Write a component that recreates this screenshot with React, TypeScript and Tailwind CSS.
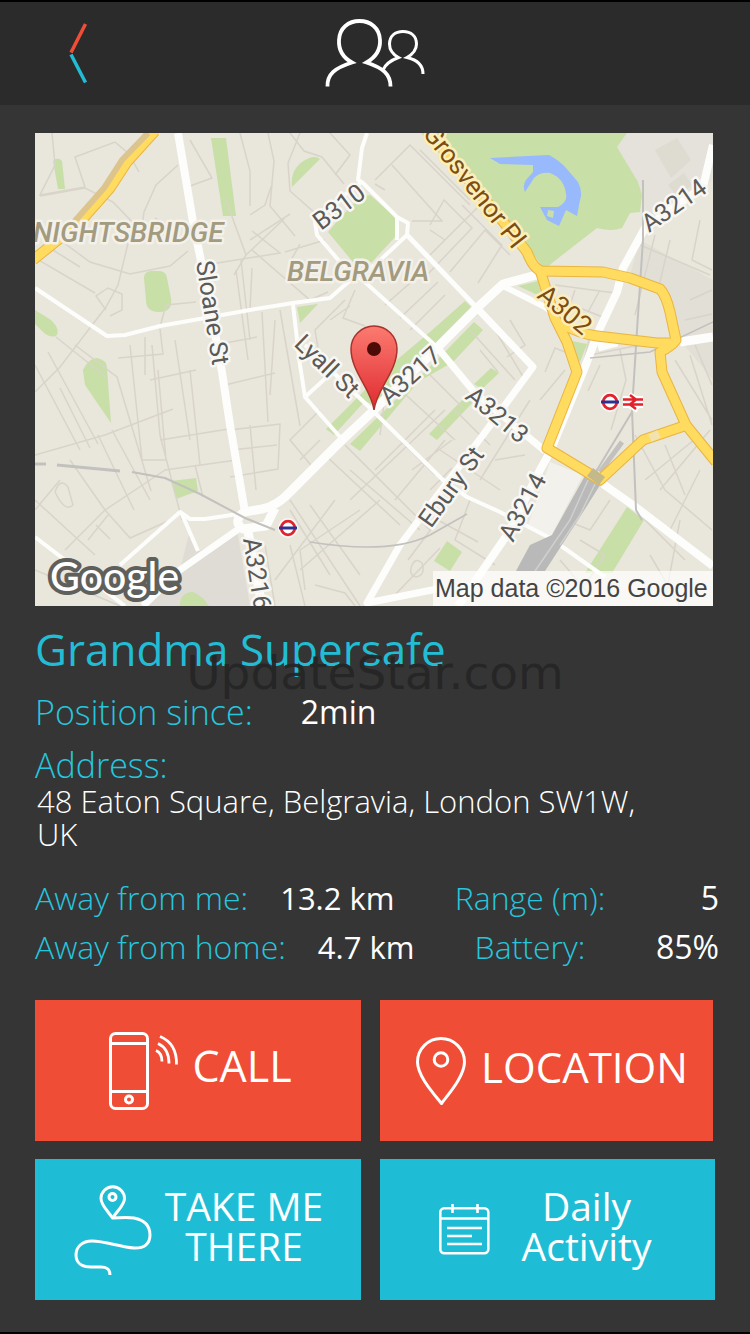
import React from 'react'

interface MapLabel {
  text: string
  x: number
  y: number
  angle: number
  anchor?: 'start' | 'end'
}

const streetLabels: MapLabel[] = [
  { text: 'Sloane St', x: 196, y: 262, angle: 81 },
  { text: 'B310', x: 321, y: 231, angle: -37 },
  { text: 'Lyall St', x: 293, y: 345, angle: 44 },
  { text: 'A3217', x: 389, y: 406, angle: -42 },
  { text: 'A3213', x: 464, y: 398, angle: 40 },
  { text: 'Ebury St', x: 431, y: 529, angle: -54 },
  { text: 'A3214', x: 513, y: 543, angle: -62 },
  { text: 'A3214', x: 649, y: 233, angle: -35 },
  { text: 'A3216', x: 243, y: 539, angle: 81 }
]

const mainRoadLabels: MapLabel[] = [
  { text: 'Grosvenor Pl', x: 513, y: 250, angle: 52, anchor: 'end' },
  { text: 'A302', x: 536, y: 297, angle: 40 }
]

const parks = [
  'M421 133L530 250L545 270L552 263L597 228Q612 232 622 228L630 213L640 212L642 195L638 182L617 147L627 133Z',
  'M328 232L340 218L360 197L370 195L393 215Q401 226 395 237L372 262Q362 264 353 262Z',
  'M211 138h15l10 78h-13Z',
  'M144 278q0-7 8-7h7q7 0 8 7l4 20q2 14-12 14q-13 0-13-12Z',
  'M53 161q5-5 9 0l3 28h-7Z',
  'M35 310l16 10q10 10 5 16q-6 2-13-4l-8-8Z',
  'M83 370q6-12 14-12q10 2 10 10l4 55l-26-38Z',
  'M292 187q-2-16 10-25q12-8 18-3Z',
  'M297 307l21-3l-18 19Z',
  'M430 332l35-31l6 6l-97 98l-9-4l-31 34l-8-6l60-60Z',
  'M350 444l93-90l31-32l9 8l-30 32l-35 20l-58 69Z',
  'M429 434l37-38l8 5l-37 39Z',
  'M474 384l17-16l8 5l-17 16Z',
  'M171 481l25-3l2 13l-22 8Z',
  'M447 541l15 11l-12 19l-16-10Z',
  'M627 507l17 13l-32 53h-27Z',
  'M180 606q0-14 13-14q10 4 16 14Z',
  'M518 286l20-5l4 16Z',
  'M567 340l20 4l-7 18Z'
]

const minorRoads = [
  'M52 133l3 32l-15 30l45-8l-10-30l40-15l14 12l10 18',
  'M178 165l-22 20l-12 27l-4 28l35-10l-20-12',
  'M190 140l22 38l-22 8',
  'M40 196l45-8l28 14l27 28l40 8',
  'M60 240l30 22l40 12l40-8l18-15',
  'M130 235l-12 50l-12 22l-46 60l-25 25',
  'M35 258l60 35M45 245l35 22',
  'M106 310l-10-14l12-8l14 6v16l-12 6',
  'M160 327l6-22l30-3M145 375v-38M118 358l45-4l-3-25',
  'M75 345l42 32l34 114M56 337l50 40',
  'M35 365l45 85M48 352l50 92M60 388l30 60',
  'M35 455l70-20l68-26M98 435l36 75M112 430l38 70',
  'M130 345l12 115l24 0l-8-90M152 345l8 90l22 85',
  'M175 340l15 100M190 370l10 95M150 380l46-10',
  'M160 440l75-12M165 470l72-10M195 465l8 32',
  'M35 500l60 55M60 480l-25 30M70 460l35 50l60-40M105 510l-40 40M105 510l25 28l45-20',
  'M55 492q5-15 13-5l5 18q-8 8-18-13',
  'M88 540l20-25M96 525l14 14M35 570l85 36',
  'M226 200l20 55l-12 20M240 133l10 38v35M268 133l6 28l-4 45l25 30',
  'M250 215l15-10l6-18M246 255l38-36M205 265l75-12l-28-22',
  'M236 270l12 90M250 340l-9-80M280 310l20 116M262 312l6 110M275 320l-5 75M215 345l42-8M225 385l50-12',
  'M230 430l50-6l-2 45l-48 8M232 450l45-5M250 425l6 65',
  'M290 133l14 18l18 6l22 27M300 133l-12 30l2 28l25 22M330 133l20 22l-15 20',
  'M250 240l40-26M252 250l58 50l18-8M285 252l40-12M290 262l10-18M252 268l-2 42',
  'M345 300l-30 30l5 30M355 290l-12 28l22 8M330 320l20-14',
  'M375 180l35-35l60 60M392 165l50 56l-30 0M420 150l50 50M385 190l-10-6',
  'M430 225l14-25l28 28l-44 46M445 240l-15-10M430 255l60-60M450 272l35-42l25 25M462 205l40 40l-24 38',
  'M410 330l35-35M385 305l40-35M400 318l38-36',
  'M395 385l60 55M385 395l-5 40M375 470l60-60M350 500l95-90M420 365l42 42M400 440l35 35',
  'M325 455l75 70M345 445l85 85M310 505l50 70M290 510l40 65M335 500l-60 80',
  'M290 500l70 106M300 570l80-70M350 470l70 60M305 590l-5-40l60-40',
  'M315 470l-25-30l30-30M300 460l20-20M395 500l50-60M412 470l40-30M430 490l22-22',
  'M265 545l10 61M290 545l15 61M315 585l30 8l10 13',
  'M408 560l30-40l40 22M390 600l50-52M470 500l-15 40l40 25',
  'M412 565q4-8 10-2q4 12-6 14q-8-2-4-12',
  'M495 330l30 50M510 320l15 25l-18 12M470 330l45 50M480 350l18 22',
  'M455 410l35 35M480 480l50-80M500 490l-60-40M495 460l30-5',
  'M545 372l10-24l15 6M540 400l25-30M560 300l45 18M575 290l-6 18M600 290l-12 22M555 285l60 8',
  'M590 335l-8 35M590 355l40-8l30-4M600 365l-12 26M620 350l6 30l-15 50',
  'M640 245l70 30M655 235l-20 80M700 220l-8 40l20 10M670 240l-12 50',
  'M690 300l22-10M685 320l27-6M690 355l22 70M675 360l37 60M695 345l17 40',
  'M635 435l30 55l47 40M665 445l20 50M660 490l50-60M645 480l55-45M625 500l60 60M700 470l-30 60M650 555l30 51M680 520l-15 80M610 500l-20 30l-20-8',
  'M580 540l25 15l-20 30M560 560l30 35'
]

const whiteRoads: { d: string; width: number }[] = [
  { d: 'M178 133L193 222L208 295L222 372L230 425L245 512', width: 8 },
  { d: 'M35 288L107 336L125 335L160 326L250 310L293 303L330 298L347 283L375 265L407 235L408 223L397 217L363 183L358 180L362 148L367 133', width: 4 },
  { d: 'M363 181L318 215L315 222L317 235L340 262L367 284L437 347', width: 4 },
  { d: 'M397 217L397 240', width: 4 },
  { d: 'M407 235L477 308', width: 5 },
  { d: 'M477 308L533 367L483 435L400 545L367 603L437 589', width: 7 },
  { d: 'M437 347L475 393L545 451', width: 7 },
  { d: 'M540 274L503 284L477 308L437 348L373 411L340 442L290 492Q277 506 262 509L244 512Q232 522 243 529L266 526L275 508', width: 9 },
  { d: 'M503 286L545 307L565 322', width: 6 },
  { d: 'M240 528L180 570L143 606', width: 7 },
  { d: 'M120 565L180 512L190 519L205 519L238 514M181 512L198 551', width: 4 },
  { d: 'M35 537L125 606', width: 4 },
  { d: 'M247 526L262 606', width: 9 },
  { d: 'M293 305L300 365L305 397L340 437M305 397L327 377', width: 4 },
  { d: 'M305 345L373 411L443 480L467 497L500 512L550 538L605 577', width: 4 },
  { d: 'M713 145L703 187L645 228L623 268L617 292L600 328L583 372L550 452L540 470L507 535L458 606', width: 8 },
  { d: 'M598 347L617 342M680 342L713 337', width: 9 },
  { d: 'M603 484L637 508L713 566', width: 8 }
]

const yellowRoads = [
  'M33 260L80 222L110 188L127 162L155 131',
  'M428 131L510 230L527 252Q533 268 541 271L603 272L630 278L660 289Q666 295 670 312L676 340Q672 346 660 352L662 372L686 425L716 462',
  'M540 270L555 318L567 342L577 372L547 448L600 480L643 440L687 425',
  'M560 323Q580 334 597 336L657 343L676 343'
]

function BackIcon() {
  return (
    <svg viewBox="0 0 20 62" className="h-[62px] w-5" fill="none" strokeWidth="3.5">
      <path d="M17.500 1L3 29.500" stroke="#f04e37" />
      <path d="M3 31.500L17.500 59.500" stroke="#22bdd4" />
    </svg>
  )
}

function PeopleIcon() {
  return (
    <svg viewBox="325 19 102 70" className="h-[70px] w-[102px]" fill="none" stroke="#fff" strokeWidth="3.800">
      <path d="M328.500 86.500C328 74 336 68 353 62.500C343 57 339.500 49 340 40C340.500 28 349.500 21 360.500 21C371.500 21 380.500 28 381 40C381.500 49 377 57 367.500 62.500C384 68 391.500 74 391.500 86.500" />
      <path d="M384 70C386 65 390 61 399.500 57.500C393 54 390.500 49 390.500 44C390.500 36 396 31.500 404 31.500C412 31.500 417.500 36 417.500 44C417.500 49 414 54 408 57.500C419 60 424 65 424 74" strokeWidth="3" />
    </svg>
  )
}

function PhoneIcon() {
  return (
    <svg viewBox="109 1029 72 82" className="h-[82px] w-[72px]" fill="none" stroke="#fff" strokeWidth="3">
      <rect x="111.500" y="1032.500" width="37" height="75" rx="5" />
      <path d="M112 1042.500h36M112 1090.500h36" />
      <circle cx="130" cy="1098.500" r="3.500" />
      <path d="M157 1049.500q6 2.500 6 11M159 1042.500q11 5 11 20M161 1035.500q17 7 16.500 28" strokeWidth="2.800" />
    </svg>
  )
}

function PinIcon() {
  return (
    <svg viewBox="415 1035 52 70" className="h-[70px] w-[52px]" fill="none" stroke="#fff" strokeWidth="3">
      <path d="M441.500 1102.500C434 1093 417.500 1075 417.500 1061A23.500 23.500 0 0 1 464.500 1061C464.500 1075 448.500 1093 441.500 1102.500Z" strokeLinejoin="round" />
      <circle cx="441" cy="1058.500" r="6.800" />
    </svg>
  )
}

function RouteIcon() {
  return (
    <svg viewBox="73 1183 80 92" className="h-[92px] w-20" fill="none" stroke="#fff" strokeWidth="3">
      <path d="M112.500 1217C107 1209 101 1204 101 1197.500A11.700 11.700 0 0 1 124.500 1197.500C124.500 1204 118 1209 112.500 1217C120 1216.500 128 1216 134 1217C144 1219 150 1225 150 1234C150 1243 144 1247.500 134 1247C120 1246 105 1240 92 1240C82 1240 76 1246 76 1254C76 1262 82 1266 91 1266H101C107 1266 110 1268 110 1274" strokeLinejoin="round" />
      <circle cx="112.500" cy="1196" r="3.500" />
    </svg>
  )
}

function CalendarIcon() {
  return (
    <svg viewBox="438 1203 52 54" className="h-[54px] w-[52px]" fill="none" stroke="#fff" strokeWidth="2.600">
      <rect x="440.300" y="1208.300" width="48" height="45" rx="4" />
      <path d="M440 1218.500h48M452.500 1204v9M477.500 1204v9M447 1228h35M447 1236h25M447 1244h35" />
    </svg>
  )
}

function Roundel({ x, y }: { x: number; y: number }) {
  return (
    <g>
      <circle cx={x} cy={y} r="10" fill="#fff" fillOpacity="0.700" />
      <circle cx={x} cy={y} r="6.800" fill="#fff" stroke="#e2232c" strokeWidth="2.800" />
      <path d={`M${x - 9} ${y}h18`} stroke="#2c3192" strokeWidth="3" />
    </g>
  )
}

function LocationMap() {
  return (
    <svg viewBox="35 133 678 473" className="mr-0.5 block h-auto" role="img" aria-label="Map">
      <defs>
        <linearGradient id="pin" x1="0" y1="0" x2="0" y2="1">
          <stop offset="0" stopColor="#fb7b70" />
          <stop offset="1" stopColor="#e02a30" />
        </linearGradient>
      </defs>
      <rect x="35" y="133" width="678" height="473" fill="#e9e6dc" />
      <path d="M617 147L627 133H713V180L650 225L638 182Z" fill="#e4e2da" />
      <path d="M640 240L713 280V380L680 340L665 290L630 275Z" fill="#e2dfd7" />
      <path d="M190 530L200 551L237 530L250 606H143L180 570Z" fill="#dfdcd5" />
      <path d="M550 462L583 475L550 538L528 525Z" fill="#f2f1ec" />
      <path d="M655 150l22-12l14 22l-20 18ZM668 185l16-12l8 12l-14 12Z" fill="#dedbd0" />

      <g fill="#c8dfa8">
        {parks.map((d) => (
          <path key={d} d={d} />
        ))}
      </g>
      <path
        d="M490 158L549 155Q560 161 566 168L578 182Q583 192 580 200L577 216L566 210L559 226L547 220L540 207L558 207Q568 202 566 194Q564 178 550 173Q540 172 534 178L525 192Q522 186 526 180L533 172V165L500 164Z"
        fill="#98b9fc"
      />
      <path d="M548 210l6 1l-1 7l-6-2Z" fill="#c8dfa8" />

      <g fill="none" stroke="#d9d4ca" strokeWidth="1.500">
        {minorRoads.map((d) => (
          <path key={d} d={d} />
        ))}
      </g>

      <g fill="none" stroke="#fdfdfb" strokeLinejoin="round">
        {whiteRoads.map((road) => (
          <path key={road.d} d={road.d} strokeWidth={road.width} />
        ))}
      </g>

      {/* Railway lines */}
      <g fill="none" stroke="#c2c1be">
        <path d="M35 464h11M57 465L120 471" strokeWidth="3" />
        <path d="M132 472L165 478L200 494L245 518L275 530" strokeWidth="2" />
        <path d="M643 180V240L637 330L632 410L636 510L642 520" strokeWidth="2" />
        <path d="M590 358L650 352L713 322" strokeWidth="1.500" />
        <path d="M310 542Q390 555 430 535L467 514" strokeWidth="1.500" />
        <path d="M632 412L594 475" strokeWidth="2" />
        <path d="M622 442L600 472" strokeWidth="5" />
      </g>
      <path d="M586 474L602 482L578 520L545 571H516L530 545L552 535Z" fill="#b9b9b9" />
      <path d="M595 484L580 515L560 545M588 480L570 520L535 571" fill="none" stroke="#d0d0ce" strokeWidth="1.500" />

      <g fill="none" stroke="#e9b541" strokeWidth="11" strokeLinejoin="round">
        {yellowRoads.map((d) => (
          <path key={d} d={d} />
        ))}
      </g>
      <g fill="none" stroke="#ffdb60" strokeWidth="9" strokeLinejoin="round">
        {yellowRoads.map((d) => (
          <path key={d} d={d} />
        ))}
      </g>
      <path d="M74 222L104 188L122 160L148 133" fill="none" stroke="#dcc48c" strokeWidth="6" />
      <path d="M650 438l9-4" stroke="#f1e2ae" strokeWidth="8" />
      <path d="M590 472l12 9" stroke="#c4b98a" strokeWidth="10" />

      <Roundel x={288} y={528} />
      <Roundel x={610} y={402} />
      <path d="M623 399h20M623 405h20M629 395l9 5l-9 5l9 5" fill="none" stroke="#fff" strokeWidth="6" />
      <path d="M623 399.500h20M623 404.500h20M630 395l6 4.500l-6 5l6 4.500" fill="none" stroke="#e3212b" strokeWidth="2.500" />

      <g
        fontFamily="Roboto, 'Liberation Sans', sans-serif"
        paintOrder="stroke"
        strokeLinejoin="round"
        strokeWidth="5"
      >
        <g fill="#a39b80" stroke="#f3f1e9" fontSize="28" fontStyle="italic" fontWeight="500">
          <text x="33" y="242">NIGHTSBRIDGE</text>
          <text x="287" y="281">BELGRAVIA</text>
        </g>
        <g fill="#5a5a58" stroke="#f8f7f3" fontSize="25">
          {streetLabels.map((label) => (
            <text key={label.text + label.x} transform={`translate(${label.x} ${label.y}) rotate(${label.angle})`}>
              {label.text}
            </text>
          ))}
        </g>
        <g fill="#7b4d14" stroke="#fdeeb8" fontSize="26">
          {mainRoadLabels.map((label) => (
            <text
              key={label.text}
              textAnchor={label.anchor}
              transform={`translate(${label.x} ${label.y}) rotate(${label.angle})`}
            >
              {label.text}
            </text>
          ))}
        </g>
      </g>

      {/* Marker */}
      <path
        d="M374 410C372 390 351 372 351 349A23 23 0 0 1 397 349C397 372 376 390 374 410Z"
        fill="url(#pin)"
        stroke="#a8322c"
        strokeWidth="1.500"
      />
      <circle cx="374" cy="349" r="7" fill="#4d0b08" />

      <rect x="433" y="571" width="280" height="35" fill="#fff" fillOpacity="0.700" />
      <text x="435" y="597" fontSize="25" fill="#444" fontFamily="'Liberation Sans', Arial, sans-serif">
        Map data ©2016 Google
      </text>
      <text
        x="50"
        y="591"
        fontSize="41"
        fontWeight="500"
        fill="#fff"
        stroke="#5f5f5c"
        strokeWidth="8"
        strokeLinejoin="round"
        paintOrder="stroke"
        fontFamily="Lato, sans-serif"
      >
        Google
      </text>
    </svg>
  )
}

interface StatProps {
  label: string
  value: string
}

function Stat({ label, value }: StatProps) {
  return (
    <div className="flex gap-8 whitespace-nowrap">
      <dt className="text-[32px] font-light text-[#25c6de]">{label}</dt>
      <dd className="text-[31px]">{value}</dd>
    </div>
  )
}

function CenteredStat({ label, value }: StatProps) {
  return (
    <div className="grid grid-cols-[190px_94px]">
      <dt className="text-center text-[32px] font-light text-[#25c6de]">{label}</dt>
      <dd className="text-right text-[32px]">{value}</dd>
    </div>
  )
}

interface ActionButtonProps {
  icon: React.ReactNode
  className: string
  children: React.ReactNode
}

function ActionButton({ icon, className, children }: ActionButtonProps) {
  return (
    <button type="button" className={`flex h-[141px] items-center justify-center text-white ${className}`}>
      {icon}
      <span className="pb-2">{children}</span>
    </button>
  )
}

export default function App() {
  return (
    <div className="min-h-screen border-y-2 border-black bg-[#353535] font-['Open_Sans','Noto_Sans',sans-serif] text-white">
      <header className="grid h-[103px] grid-cols-3 items-center bg-[#2b2b2b]">
        <button type="button" aria-label="Back" className="justify-self-start pl-17">
          <BackIcon />
        </button>
        <div className="justify-self-center">
          <PeopleIcon />
        </div>
      </header>

      <main className="px-[35px] pt-7">
        <div className="grid">
          <LocationMap />
        </div>

        <section className="relative pt-[15px]">
          <h1 className="text-[44px] leading-[56px] text-[#22bdd4]">Grandma Supersafe</h1>
          <p className="pointer-events-none absolute inset-x-0 top-[39px] text-center font-['DejaVu_Sans',sans-serif] text-[47px] leading-[56px] text-[#252525]/95">
            UpdateStar.com
          </p>

          <dl>
            <div className="mt-[15px] flex gap-12 text-[34px] leading-10">
              <dt className="font-light text-[#25c6de]">Position since:</dt>
              <dd className="text-[32px]">2min</dd>
            </div>
            <div className="mt-[13px]">
              <dt className="text-[34px] leading-10 font-light text-[#25c6de]">Address:</dt>
              <dd className="pr-14 pl-0.5 text-[31px] leading-[33px] font-light">
                48 Eaton Square, Belgravia, London SW1W, UK
              </dd>
            </div>
          </dl>

          <dl className="mt-[27px] -mr-1 grid grid-cols-[1fr_284px] gap-y-[9px] leading-10">
            <Stat label="Away from me:" value="13.2 km" />
            <CenteredStat label="Range (m):" value="5" />
            <Stat label="Away from home:" value="4.7 km" />
            <CenteredStat label="Battery:" value="85%" />
          </dl>
        </section>

        <div className="mt-[33px] grid grid-cols-[326fr_335fr] gap-x-[19px] gap-y-[18px]">
          <ActionButton icon={<PhoneIcon />} className="gap-3 bg-[#ef4d36] pl-1 text-[43px]">
            CALL
          </ActionButton>
          <ActionButton icon={<PinIcon />} className="mr-0.5 gap-3.5 bg-[#ef4d36] pl-2.5 text-[42px]">
            LOCATION
          </ActionButton>
          <ActionButton icon={<RouteIcon />} className="gap-3 bg-[#1fbdd5] text-[39px] leading-10">
            TAKE ME
            <br />
            THERE
          </ActionButton>
          <ActionButton icon={<CalendarIcon />} className="gap-8 bg-[#1fbdd5] pr-1.5 text-[39px] leading-10">
            Daily
            <br />
            Activity
          </ActionButton>
        </div>
      </main>
    </div>
  )
}
